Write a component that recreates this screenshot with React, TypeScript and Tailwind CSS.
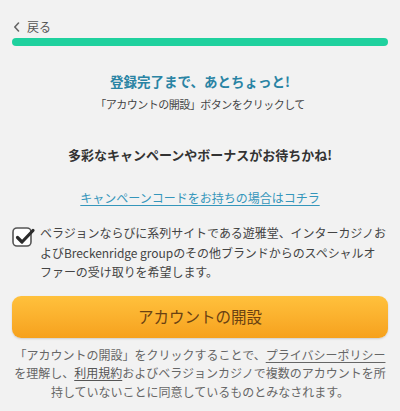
import React from 'react';

const FONT = "font-['Noto_Sans_CJK_JP','Noto_Sans',sans-serif]";

const CheckIcon = () => (
  <svg width="24" height="22" viewBox="0 0 24 22" className="shrink-0">
    <rect x="1" y="2" width="18" height="18" rx="4" fill="#fff" stroke="#555" strokeWidth="1.6" />
    <path d="M5.5 11.5 L10 16 L21 4.5" fill="none" stroke="#2b2b2b" strokeWidth="3.2" strokeLinecap="round" strokeLinejoin="round" />
  </svg>
);

export default function App() {
  return (
    <div className={`w-[400px] h-[411px] overflow-hidden bg-[#f2f2f2] px-3 ${FONT}`}>
      {/* back link */}
      <div className="pt-[19px] h-[35px] flex items-center gap-[7px] text-[12px] leading-4 text-[#555]">
        <svg width="7" height="10" viewBox="0 0 7 10" className="ml-[1px]">
          <path d="M5.5 1 L1.8 5 L5.5 9" fill="none" stroke="#666" strokeWidth="1.6" strokeLinecap="round" strokeLinejoin="round" />
        </svg>
        <span>戻る</span>
      </div>

      {/* progress */}
      <div className="mt-[3px] h-2 rounded-full bg-[#1fd19e]" />

      <h1 className="mt-[25px] text-center text-[13.5px] leading-5 font-bold text-[#2a84a4]">
        登録完了まで、あとちょっと!
      </h1>
      <p className="mt-[3px] text-center text-[11px] leading-5 text-[#444] tracking-[-0.5px]">
        「アカウントの開設」ボタンをクリックして
      </p>
      <p className="mt-[31px] text-center text-[13px] leading-5 font-bold text-[#333]">
        多彩なキャンペーンやボーナスがお待ちかね!
      </p>

      <div className="mt-[23px] text-center text-[12px] leading-5">
        <a className="text-[#3596bb] underline underline-offset-2">キャンペーンコードをお持ちの場合はコチラ</a>
      </div>

      {/* opt-in */}
      <div className="mt-[15px] flex gap-[4px]">
        <div className="pt-[3px]">
          <CheckIcon />
        </div>
        <p className="text-[12px] leading-[19.5px] text-[#444] whitespace-nowrap tracking-[-0.05px]">
          ベラジョンならびに系列サイトである遊雅堂、インターカジノお
          <br />
          よびBreckenridge groupのその他ブランドからのスペシャルオ
          <br />
          ファーの受け取りを希望します。
        </p>
      </div>

      <button className="mt-[14px] w-full h-[42px] rounded-[9px] bg-gradient-to-b from-[#ffc13c] to-[#f6a11c] shadow-[0_1px_2px_rgba(0,0,0,0.15)] text-[15.5px] text-[#6a4112]">
        アカウントの開設
      </button>

      <p className="mt-[8px] text-center text-[12px] leading-[18.5px] text-[#666] whitespace-nowrap">
        「アカウントの開設」をクリックすることで、<span className="underline underline-offset-2">プライバシーポリシー</span>
        <br />
        を理解し、<span className="underline underline-offset-2 text-[#555]">利用規約</span>およびベラジョンカジノで複数のアカウントを所
        <br />
        持していないことに同意しているものとみなされます。
      </p>
    </div>
  );
}
